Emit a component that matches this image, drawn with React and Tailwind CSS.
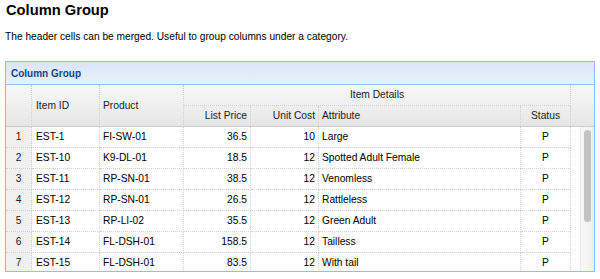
import React from "react";

const rows = [
  [1, "EST-1", "FI-SW-01", "36.5", "10", "Large", "P"],
  [2, "EST-10", "K9-DL-01", "18.5", "12", "Spotted Adult Female", "P"],
  [3, "EST-11", "RP-SN-01", "38.5", "12", "Venomless", "P"],
  [4, "EST-12", "RP-SN-01", "26.5", "12", "Rattleless", "P"],
  [5, "EST-13", "RP-LI-02", "35.5", "12", "Green Adult", "P"],
  [6, "EST-14", "FL-DSH-01", "158.5", "12", "Tailless", "P"],
  [7, "EST-15", "FL-DSH-01", "83.5", "12", "With tail", "P"],
];

const cell =
  "h-[21px] border-r border-b border-dotted border-[#d0d0d0] flex items-center overflow-hidden whitespace-nowrap";

export default function App() {
  return (
    <div
      className="w-[600px] h-[279px] overflow-hidden bg-white text-black"
      style={{ fontFamily: '"Liberation Sans", Arial, sans-serif' }}
    >
      <h1 className="pt-[2px] pl-[6px] text-[14.7px] leading-[17px] font-bold">Column Group</h1>
      <p className="mt-[12px] pl-[5px] text-[10.2px] leading-[12px]">
        The header cells can be merged. Useful to group columns under a category.
      </p>
      <div className="mt-[18px] mx-[5px] border border-[#99bbe8] text-[10.25px]">
        <div className="h-[23px] border-b border-[#99bbe8] bg-gradient-to-b from-[#dae5f6] to-[#e9f0fb] flex items-center pl-[5px] font-bold text-[10px] text-[#15428b]">
          Column Group
        </div>
        <div className="grid grid-cols-[26px_68px_84px_67px_68px_202px_50px_23px] grid-rows-[21px_21px] bg-gradient-to-b from-[#f8f8f8] to-[#e6e6e6] border-b border-[#cbcbcb] text-[#222] h-[42px]">
          <div className="row-span-2 border-r border-dotted border-[#d0d0d0]" />
          <div className="row-span-2 border-r border-dotted border-[#d0d0d0] flex items-center pl-[4px]">Item ID</div>
          <div className="row-span-2 border-r border-dotted border-[#d0d0d0] flex items-center pl-[3px]">Product</div>
          <div className="col-span-4 border-r border-b border-dotted border-[#d0d0d0] flex items-center justify-center">
            Item Details
          </div>
          <div className="row-span-2" />
          <div className="border-r border-dotted border-[#d0d0d0] flex items-center justify-end pr-[3px] h-[20px]">List Price</div>
          <div className="border-r border-dotted border-[#d0d0d0] flex items-center justify-end pr-[3px] h-[20px]">Unit Cost</div>
          <div className="border-r border-dotted border-[#d0d0d0] flex items-center pl-[3px] h-[20px]">Attribute</div>
          <div className="border-r border-dotted border-[#d0d0d0] flex items-center justify-center h-[20px]">Status</div>
        </div>
        <div className="flex h-[144px] overflow-hidden">
          <div className="grid grid-cols-[26px_68px_84px_67px_68px_202px_50px] auto-rows-[21px] content-start w-[565px]">
            {rows.map((r) => (
              <React.Fragment key={r[0]}>
                <div className={`${cell} justify-center bg-[#f0f0f0] text-[#222]`}>{r[0]}</div>
                <div className={`${cell} pl-[4px]`}>{r[1]}</div>
                <div className={`${cell} pl-[3px]`}>{r[2]}</div>
                <div className={`${cell} justify-end pr-[3px]`}>{r[3]}</div>
                <div className={`${cell} justify-end pr-[3px]`}>{r[4]}</div>
                <div className={`${cell} pl-[3px]`}>{r[5]}</div>
                <div className={`${cell} justify-center`}>{r[6]}</div>
              </React.Fragment>
            ))}
          </div>
          <div className="flex-1 flex justify-end">
            <div className="w-[14px] h-full bg-gradient-to-r from-[#f9f9f9] to-[#eeeeee] border-l border-[#ececec] flex justify-center">
              <div className="w-[7px] h-[92px] mt-[3px] rounded-full bg-[#c2c2c2]" />
            </div>
          </div>
        </div>
      </div>
    </div>
  );
}
